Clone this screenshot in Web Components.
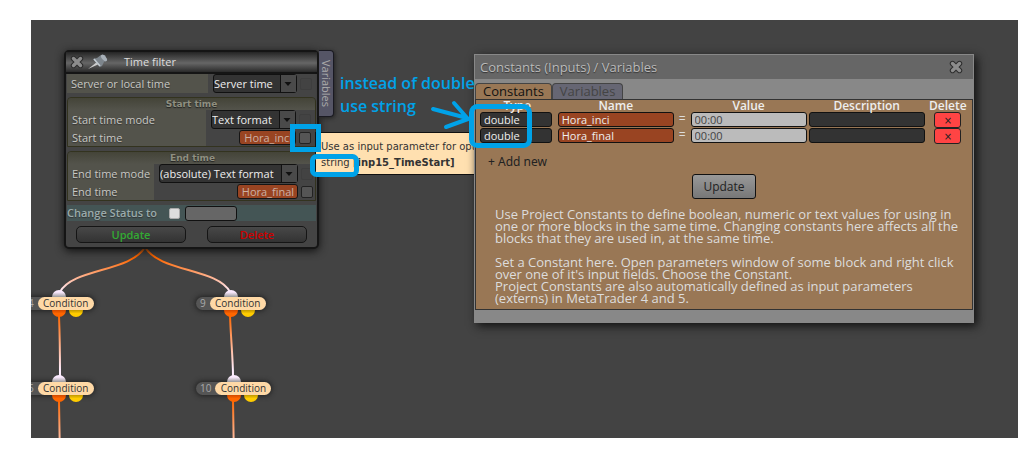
<!DOCTYPE html>
<html lang="en">
<head>
    <meta charset="utf-8">
    <meta name="viewport" content="width=device-width, initial-scale=1.0">
    <title>Time filter</title>
    <style>
        body {
            margin: 0;
            padding: 20px 17px 17px 31px;
            box-sizing: border-box;
            min-height: 100vh;
            display: flex;
            background: #fff;
            font-family: "Open Sans", "Noto Sans", sans-serif;
        }

        flow-canvas {
            flex: 1;
        }
    </style>
</head>

<body>
    <flow-canvas></flow-canvas>

    <script>
        // shared setup: every element only supplies its markup
        class BaseElement extends HTMLElement {
            constructor() {
                super()
                this.attachShadow({ mode: 'open' })
                this.shadowRoot.innerHTML = this.render()
            }
        }

        class CloseIcon extends BaseElement {
            render() {
                return `
                <style>
                    :host { display: block; width: 14px; height: 14px; }
                    button { display: block; border: 0; padding: 0; background: none; }
                    svg { display: block; }
                </style>
                <button aria-label="Close">
                    <svg width="14" height="14" viewBox="0 0 14 14" fill="none" stroke-linecap="round">
                        <path d="M3.5 3.5l7 7M10.5 3.5l-7 7" stroke="#2c2c2c" stroke-width="5.4"/>
                        <path d="M3.5 3.5l7 7M10.5 3.5l-7 7" stroke="#8c8c8c" stroke-width="3.4"/>
                    </svg>
                </button>`
            }
        }

        class FlowNode extends BaseElement {
            render() {
                return `
                <style>
                    :host {
                        display: flex;
                        position: absolute;
                        align-items: center;
                        height: 13px;
                        border-radius: 7px;
                        background: #555;
                        box-shadow: 0 0 5px 1px #222;
                        font-size: 10px;
                        line-height: 13px;
                    }
                    .number { padding: 0 4px; color: #aaa; }
                    .name { width: 56px; border-radius: 7px; background: #ffd9a6; color: #333; text-align: center; }
                    .port { position: absolute; left: calc(50% - 7px); width: 14px; height: 7px; }
                    .in { bottom: 13px; border-radius: 7px 7px 0 0; background: linear-gradient(#fbeaff 30%, #999); }
                    .out { top: 13px; border-radius: 0 0 7px 7px; background: linear-gradient(#d04800, #ff6600 50%); }
                    .alt { margin-left: 17px; background: linear-gradient(#c09800, #fc0 50%); }
                </style>
                <span class="port in"></span>
                <span class="number"><slot></slot></span>
                <span class="name">Condition</span>
                <span class="port out"></span>
                <span class="port out alt"></span>`
            }
        }

        class ParamRow extends BaseElement {
            render() {
                return `
                <style>
                    :host { display: grid; grid-template-columns: 1fr auto; min-height: 17px; }
                    .label { display: flex; align-items: center; padding: 0 4px; background: #53534b; }
                    .control { display: flex; align-items: center; justify-content: flex-end; gap: 3px; padding: 0 4px 0 5px; }
                </style>
                <div class="label"><slot name="label"></slot></div>
                <div class="control"><slot></slot></div>`
            }
        }

        // rows of a group share its two columns
        class ParamGroup extends BaseElement {
            render() {
                return `
                <style>
                    :host {
                        display: grid;
                        grid-template-columns: 1fr auto;
                        border: 1px solid #33331f;
                        border-radius: 4px 4px 0 0;
                    }
                    ::slotted(param-row) { grid-column: 1 / -1; grid-template-columns: subgrid; }
                    .title {
                        grid-column: 1 / -1;
                        height: 12px;
                        border-radius: 4px 4px 0 0;
                        background: linear-gradient(#444438, #53534b);
                        color: #8f8f80;
                        font: bold 9px/13px "DejaVu Sans", sans-serif;
                        text-align: center;
                        text-shadow: 0 1px 1px #222;
                    }
                </style>
                <div class="title"><slot name="title"></slot></div>
                <slot></slot>`
            }
        }

        // native select with a drawn arrow button over its right end
        class SelectBox extends BaseElement {
            render() {
                return `
                <style>
                    :host { display: flex; position: relative; }
                    svg { position: absolute; right: 1px; top: 1px; pointer-events: none; }
                </style>
                <slot></slot>
                <svg width="16" height="17" viewBox="0 0 16 17">
                    <rect width="16" height="17" fill="#4a4a4a"/>
                    <path d="M0 0v17" stroke="#111" stroke-width="2"/>
                    <path d="M4.5 7h7l-3.5 4z" fill="#111"/>
                </svg>`
            }
        }

        class FilterWindow extends BaseElement {
            render() {
                return `
                <style>
                    :host { display: block; position: absolute; font-size: 11px; line-height: 16px; color: #c8c8c4; }
                    button, select { font-family: inherit; }
                    .window {
                        border: 2px solid #151515;
                        border-radius: 5px;
                        background: #444;
                        box-shadow: 0 2px 8px #111;
                        box-sizing: border-box;
                        padding-bottom: 4px;
                    }
                    header {
                        display: flex;
                        align-items: center;
                        gap: 4px;
                        height: 20px;
                        padding: 0 4px;
                        border-bottom: 2px solid #151515;
                        background: linear-gradient(#252525, #666 55%, #2a2a2a);
                        color: #ddd;
                    }
                    h1 { margin: 0 0 0 12px; font-size: 11px; font-weight: normal; }
                    .params { display: flex; flex-direction: column; gap: 4px; padding: 0 1px; }
                    label { text-shadow: 0 1px 1px #333; white-space: nowrap; }
                    select {
                        appearance: none;
                        height: 19px;
                        padding: 0 23px 0 0;
                        border: 1px solid #111;
                        border-radius: 3px;
                        background: #333;
                        color: #eee;
                        font-size: 11px;
                    }
                    .constant {
                        height: 15px;
                        padding: 0 3px 0 4px;
                        border: 1px solid #151515;
                        border-radius: 3px;
                        background: #994422;
                        color: #ccb0a4;
                        font-size: 11px;
                        line-height: 12px;
                    }
                    input[type=checkbox] {
                        appearance: none;
                        width: 12px;
                        height: 12px;
                        margin: 0;
                        border: 1px solid #222;
                        border-radius: 2px;
                        background: #555;
                    }
                    input[type=checkbox]:disabled { border-color: #3e3e3e; background: #434343; }
                    .status { display: flex; align-items: center; height: 16px; margin: 4px 1px 0; background: #445555; color: #9aabab; }
                    .status label { flex: none; width: 102px; font-weight: 600; }
                    .status input[type=checkbox] { width: 11px; height: 11px; border-color: #aaa; background: #ddd; }
                    .status input[type=text] {
                        width: 52px;
                        height: 15px;
                        margin: 0 0 0 5px;
                        padding: 0 3px;
                        border: 1px solid #111;
                        border-radius: 3px;
                        background: #666;
                        box-sizing: border-box;
                    }
                    .actions { display: flex; gap: 21px; padding: 5px 10px 0; }
                    .actions button {
                        flex: 11;
                        height: 17px;
                        padding: 0;
                        border: 1px solid #151515;
                        border-radius: 5px;
                        background: linear-gradient(#484848, #333);
                        color: #3a3;
                        font-size: 11px;
                        font-weight: 600;
                        line-height: 15px;
                    }
                    .actions .delete { flex: 10; color: #c00; }
                    .tab {
                        position: absolute;
                        left: 100%;
                        top: 0;
                        height: 65px;
                        width: 14px;
                        padding: 0;
                        border: 1px solid #1a1a22;
                        border-left: 0;
                        border-radius: 0 4px 4px 0;
                        background: #555566;
                        box-shadow: 1px 1px 4px #222;
                        color: #aaa;
                        box-sizing: content-box;
                        font-size: 11px;
                        line-height: 14px;
                        writing-mode: vertical-rl;
                    }
                </style>
                <section class="window">
                    <header>
                        <close-icon></close-icon>
                        <svg width="20" height="16" viewBox="0 0 20 16">
                            <path d="M0 15l9-7 2 2z" fill="#ccc"/>
                            <path d="M5 5l4-1 4-3 4 0 2 5-3 2-2 4-2 1z" fill="#7d858c"/>
                            <path d="M6 5l6 7" stroke="#c4ccd2" stroke-width="1.5"/>
                            <ellipse cx="16" cy="4" rx="2" ry="4" transform="rotate(-40 16 4)" fill="#a8b0b8"/>
                        </svg>
                        <h1>Time filter</h1>
                    </header>
                    <div class="params">
                        <param-row>
                            <label slot="label" for="source">Server or local time</label>
                            <select-box><select id="source"><option>Server time</option></select></select-box>
                            <input type="checkbox" aria-label="Use as input" disabled>
                        </param-row>
                        <param-group>
                            <span slot="title">Start time</span>
                            <param-row>
                                <label slot="label" for="start-mode">Start time mode</label>
                                <select-box><select id="start-mode"><option>Text format</option></select></select-box>
                                <input type="checkbox" aria-label="Use as input" disabled>
                            </param-row>
                            <param-row>
                                <label slot="label" for="start">Start time</label>
                                <button class="constant" id="start">Hora_inci</button>
                                <input type="checkbox" aria-label="Use as input">
                            </param-row>
                        </param-group>
                        <param-group>
                            <span slot="title">End time</span>
                            <param-row>
                                <label slot="label" for="end-mode">End time mode</label>
                                <select-box><select id="end-mode"><option>(absolute) Text format</option></select></select-box>
                                <input type="checkbox" aria-label="Use as input" disabled>
                            </param-row>
                            <param-row>
                                <label slot="label" for="end">End time</label>
                                <button class="constant" id="end">Hora_final</button>
                                <input type="checkbox" aria-label="Use as input">
                            </param-row>
                        </param-group>
                    </div>
                    <div class="status">
                        <label for="status-on">Change Status to</label>
                        <input type="checkbox" id="status-on">
                        <input type="text" aria-label="Status">
                    </div>
                    <div class="actions">
                        <button>Update</button>
                        <button class="delete">Delete</button>
                    </div>
                </section>
                <button class="tab">Variables</button>`
            }
        }

        class HintTooltip extends BaseElement {
            render() {
                return `
                <style>
                    :host {
                        display: block;
                        position: absolute;
                        padding: 6px 4px 3px 5px;
                        border: 1px solid #111;
                        background: #ffe0b0;
                        color: #333;
                        font: 10px/16px "DejaVu Sans", sans-serif;
                        white-space: nowrap;
                    }
                    p { margin: 0; }
                </style>
                <p>Use as input parameter for opti</p>
                <p>string <b>[inp15_TimeStart]</b></p>`
            }
        }

        class ConstantsDialog extends BaseElement {
            row(name) {
                return `
                <tr>
                    <td><input class="type" value="double" aria-label="Type"></td>
                    <td><input class="name" value="${name}" aria-label="Name"></td>
                    <td class="eq">=</td>
                    <td><input class="value" value="00:00" aria-label="Value"></td>
                    <td><input class="type" aria-label="Description"></td>
                    <td><button aria-label="Delete ${name}">×</button></td>
                </tr>`
            }

            render() {
                return `
                <style>
                    :host {
                        display: block;
                        position: absolute;
                        box-sizing: border-box;
                        padding-bottom: 12px;
                        border: 1px solid #888;
                        background: #888;
                        box-shadow: 3px 3px 9px #111;
                        font-size: 13px;
                        color: #ddd;
                    }
                    button, input { font-family: inherit; }
                    header {
                        display: flex;
                        align-items: center;
                        justify-content: space-between;
                        height: 24px;
                        padding: 0 10px 0 5px;
                        background: #666;
                        color: #bbb;
                    }
                    h2 { margin: 0; font-size: 13px; font-weight: normal; text-shadow: 0 1px 1px #333; }
                    nav { display: flex; padding-top: 4px; }
                    nav button {
                        height: 16px;
                        padding: 0 7px;
                        border: 1px solid #444;
                        border-bottom: 0;
                        border-radius: 4px 4px 0 0;
                        background: #666673;
                        color: #444;
                        font-size: 13px;
                        line-height: 15px;
                    }
                    nav .active { background: #997755; color: #111; }
                    main { border: 1px solid #333; background: #997755; }
                    table { width: 100%; padding: 0 2px; border-spacing: 0; table-layout: fixed; }
                    th { height: 12px; padding: 0; font-size: 12px; font-weight: 600; line-height: 12px; color: #eee; }
                    td { height: 16px; padding: 0 1px; vertical-align: top; }
                    td:first-child { padding: 0 5px 0 2px; }
                    td.eq { padding: 0; text-align: center; line-height: 14px; font-size: 12px; }
                    td input {
                        display: block;
                        width: 100%;
                        height: 15px;
                        padding: 0 3px;
                        border: 1px solid #111;
                        border-radius: 3px;
                        box-sizing: border-box;
                        background: #333;
                        color: #eee;
                        font-size: 11px;
                    }
                    td .name { background: #994422; }
                    td .value { background: #bbb; color: #444; }
                    td button {
                        display: block;
                        width: 27px;
                        height: 16px;
                        margin: 0 auto;
                        padding: 0;
                        border: 1px solid #222;
                        border-radius: 3px;
                        background: #ff4444;
                        color: #222;
                        font: 10px/13px "DejaVu Sans", sans-serif;
                    }
                    .add {
                        display: block;
                        margin: 10px 0 0 12px;
                        padding: 0;
                        border: 0;
                        background: none;
                        color: #222;
                        font: 12px/16px "Noto Sans", sans-serif;
                    }
                    .update {
                        display: block;
                        height: 25px;
                        margin: 4px auto 0;
                        padding: 0 10px;
                        border: 1px solid #111;
                        border-radius: 3px;
                        background: linear-gradient(#999, #777);
                        color: #222;
                        font-size: 12px;
                    }
                    p { margin: 9px 8px 0 19px; line-height: 12px; }
                    p + p { margin: 12px 8px 5px 19px; }
                </style>
                <header><h2>Constants (Inputs) / Variables</h2><close-icon></close-icon></header>
                <nav><button class="active">Constants</button><button>Variables</button></nav>
                <main>
                    <table>
                        <colgroup>
                            <col style="width: 16%"><col style="width: 24%"><col style="width: 3%">
                            <col style="width: 24%"><col style="width: 24%"><col style="width: 9%">
                        </colgroup>
                        <thead>
                            <tr><th>Type</th><th>Name</th><th></th><th>Value</th><th>Description</th><th>Delete</th></tr>
                        </thead>
                        <tbody>${this.row('Hora_inci')}${this.row('Hora_final')}</tbody>
                    </table>
                    <button class="add">+ Add new</button>
                    <button class="update">Update</button>
                    <p>Use Project Constants to define boolean, numeric or text values for using in one or more blocks in the same time. Changing constants here affects all the blocks that they are used in, at the same time.</p>
                    <p>Set a Constant here. Open parameters window of some block and right click over one of it's input fields. Choose the Constant.<br>Project Constants are also automatically defined as input parameters (externs) in MetaTrader 4 and 5.</p>
                </main>`
            }
        }

        class FlowCanvas extends BaseElement {
            render() {
                return `
                <style>
                    :host { display: block; position: relative; overflow: hidden; background: #434343; }
                    svg { position: absolute; left: 0; top: 0; width: 100%; height: 100%; pointer-events: none; }
                    filter-window { left: 33px; top: 30px; width: 255px; }
                    hint-tooltip { left: 284px; top: 112px; }
                    constants-dialog { left: 443px; top: 34px; width: 500px; }
                    .note {
                        position: absolute;
                        left: 309px;
                        top: 52px;
                        margin: 0;
                        color: #00a2e8;
                        font-size: 16px;
                        font-weight: 600;
                        line-height: 23px;
                        white-space: nowrap;
                    }
                </style>
                <svg fill="none" stroke-width="2">
                    <defs>
                        <linearGradient id="w1" gradientUnits="userSpaceOnUse" x1="0" y1="230" x2="0" y2="272"><stop offset=".2" stop-color="#ff6600"/><stop offset="1" stop-color="#ffeeff"/></linearGradient>
                        <linearGradient id="w2" gradientUnits="userSpaceOnUse" x1="0" y1="296" x2="0" y2="356"><stop offset="0" stop-color="#ff6600"/><stop offset=".9" stop-color="#ffeeff"/></linearGradient>
                        <linearGradient id="w3" gradientUnits="userSpaceOnUse" x1="0" y1="380" x2="0" y2="442"><stop offset="0" stop-color="#ff6600"/><stop offset="1" stop-color="#ffeeff"/></linearGradient>
                    </defs>
                    <path stroke="url(#w1)" d="M114 227C100 252 42 248 29 272M114 227C128 252 186 248 199 272"/>
                    <path stroke="url(#w2)" d="M28 296C29 320 29 340 29 356M199 296C200 320 202 340 202 356"/>
                    <path stroke="url(#w3)" d="M28 380L29 442M202 380L203 442"/>
                </svg>
                <flow-node style="left: -7px; top: 277px">4</flow-node>
                <flow-node style="left: 165px; top: 277px">9</flow-node>
                <flow-node style="left: -7px; top: 362px">6</flow-node>
                <flow-node style="left: 165px; top: 362px">10</flow-node>
                <filter-window></filter-window>
                <hint-tooltip></hint-tooltip>
                <constants-dialog></constants-dialog>
                <p class="note">instead of double<br>use string</p>
                <svg fill="none" stroke="#00a2e8" stroke-width="5">
                    <rect x="261.5" y="106.5" width="26" height="23"/>
                    <rect x="281.5" y="136.5" width="44" height="18" rx="4"/>
                    <rect x="440.5" y="86.5" width="58" height="39" rx="6"/>
                    <path stroke-linecap="round" stroke-linejoin="round" stroke-width="4" d="M402 89l34 9M423 83l14 16-22 8"/>
                </svg>`
            }
        }

        customElements.define("close-icon", CloseIcon)
        customElements.define("flow-node", FlowNode)
        customElements.define("param-row", ParamRow)
        customElements.define("param-group", ParamGroup)
        customElements.define("select-box", SelectBox)
        customElements.define("filter-window", FilterWindow)
        customElements.define("hint-tooltip", HintTooltip)
        customElements.define("constants-dialog", ConstantsDialog)
        customElements.define("flow-canvas", FlowCanvas)
    </script>
</body>
</html>
